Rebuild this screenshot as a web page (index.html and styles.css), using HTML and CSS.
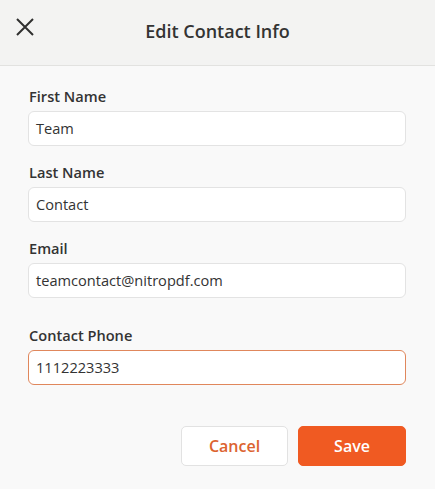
FILE: index.html
```html
<!DOCTYPE html>
<html lang="en">
<head>
<meta charset="utf-8">
<title>Edit Contact Info</title>
<link rel="stylesheet" href="styles.css">
</head>
<body>
<div class="sheet">
  <header class="topbar">
    <button class="close" aria-label="Close">
      <svg width="20" height="20" viewBox="0 0 20 20"><path d="M2 2 L18 18 M18 2 L2 18" stroke="#2f2f2f" stroke-width="2" stroke-linecap="butt" fill="none"/></svg>
    </button>
    <h1 class="title">Edit Contact Info</h1>
  </header>
  <form class="form">
    <div class="field">
      <label class="label">First Name</label>
      <div class="input">Team</div>
    </div>
    <div class="field">
      <label class="label">Last Name</label>
      <div class="input">Contact</div>
    </div>
    <div class="field">
      <label class="label">Email</label>
      <div class="input">teamcontact@nitropdf.com</div>
    </div>
    <div class="field field-phone">
      <label class="label">Contact Phone</label>
      <div class="input input-focus">1112223333</div>
    </div>
    <div class="actions">
      <button type="button" class="btn btn-cancel">Cancel</button>
      <button type="button" class="btn btn-save">Save</button>
    </div>
  </form>
</div>
</body>
</html>
```
FILE: styles.css
```css
html, body {
  margin: 0;
  padding: 0;
  background: #f9f9f9;
  font-family: "Open Sans", "Noto Sans", sans-serif;
  color: #333;
}
.sheet {
  width: 435px;
  min-height: 489px;
}
.topbar {
  position: relative;
  height: 65px;
  background: #f3f3f2;
  border-bottom: 1px solid #e2e2e0;
  display: flex;
  align-items: center;
  justify-content: center;
}
.close {
  position: absolute;
  left: 15px;
  top: 17px;
  width: 20px;
  height: 20px;
  padding: 0;
  border: 0;
  background: none;
  display: flex;
}
.title {
  margin: 0;
  font-size: 18px;
  font-weight: 600;
  color: #333;
  line-height: 24px;
  margin-top: -4px;
}
.form {
  padding: 20px 29px 0 28px;
  display: flex;
  flex-direction: column;
  gap: 16px;
}
.field {
  display: flex;
  flex-direction: column;
  gap: 5px;
}
.field-phone {
  margin-top: 11px;
}
.label {
  font-size: 14.6px;
  font-weight: 600;
  line-height: 20px;
  color: #333;
  padding-left: 1px;
}
.input {
  height: 35px;
  box-sizing: border-box;
  background: #fff;
  border: 1px solid #e3e3e3;
  border-radius: 6px;
  padding: 0 7px;
  font-size: 14.6px;
  line-height: 33px;
  color: #333;
}
.input-focus {
  border-color: #e0875c;
}
.actions {
  margin-top: 25px;
  display: flex;
  justify-content: flex-end;
  gap: 10px;
}
.btn {
  height: 40px;
  border-radius: 5px;
  font-family: "Open Sans", "Noto Sans", sans-serif;
  font-size: 16px;
  font-weight: 600;
  padding: 0;
  cursor: pointer;
}
.btn-cancel {
  width: 107px;
  background: #fff;
  border: 1px solid #e2e2e2;
  color: #dc6330;
}
.btn-save {
  width: 108px;
  background: #f05a22;
  border: 1px solid #f05a22;
  color: #fff;
}
```
